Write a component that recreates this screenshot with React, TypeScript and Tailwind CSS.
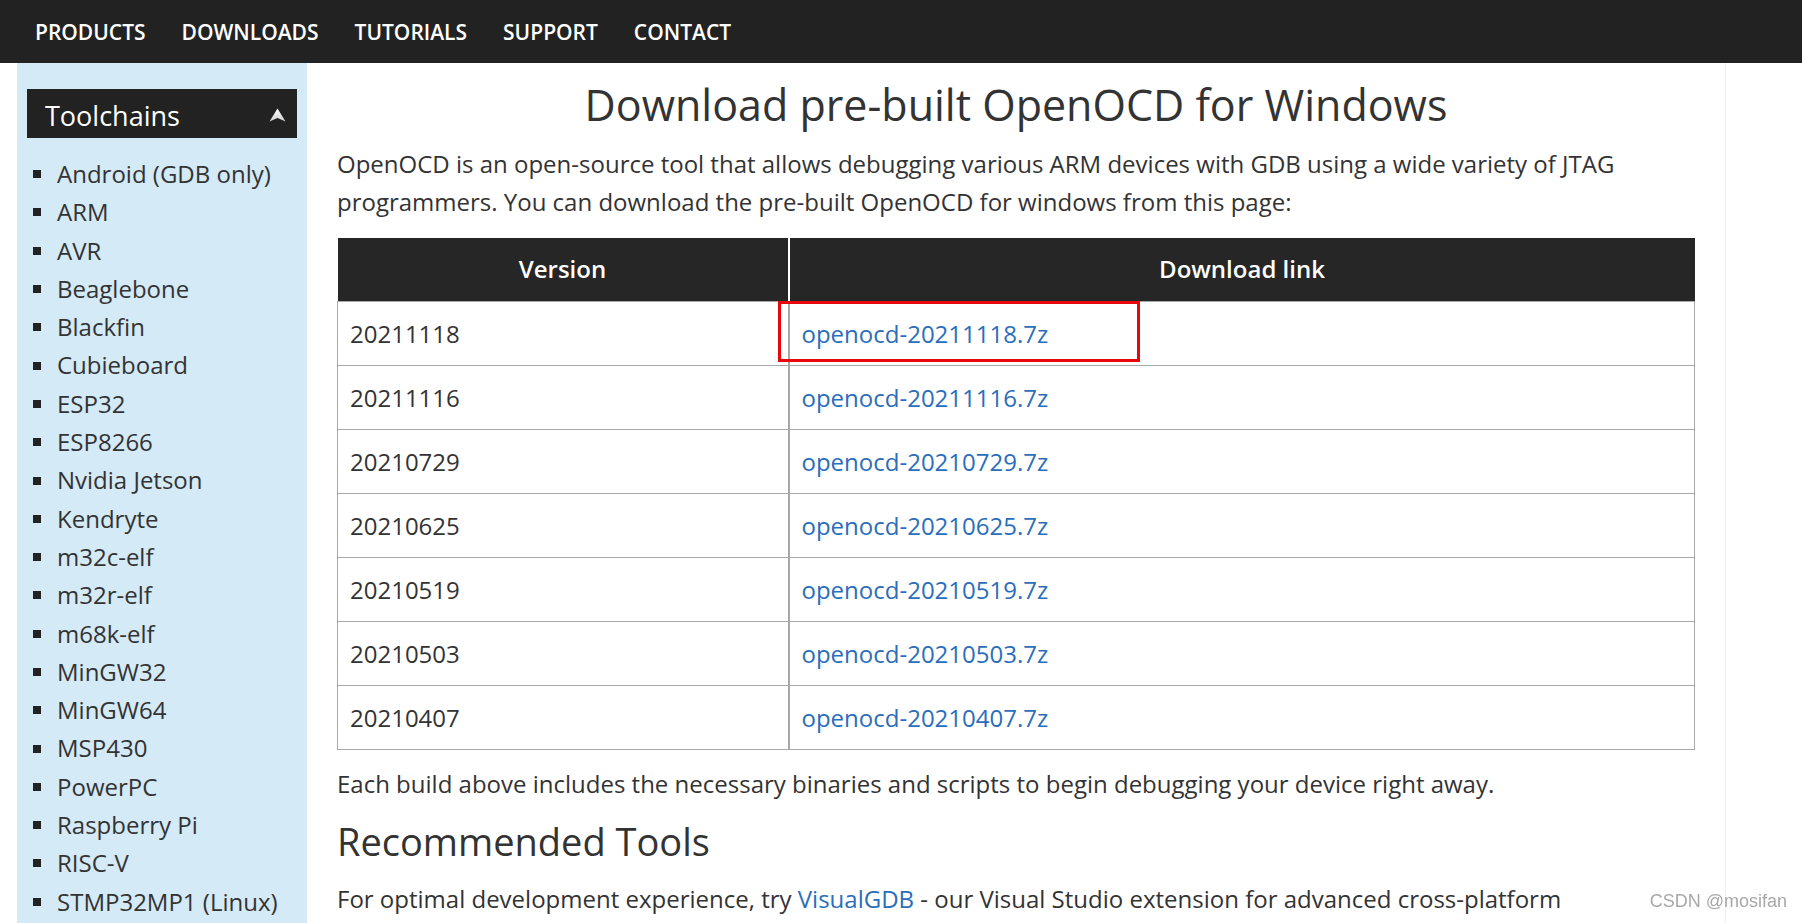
import React from "react";

const navItems = ["PRODUCTS", "DOWNLOADS", "TUTORIALS", "SUPPORT", "CONTACT"];

const toolchains = [
  "Android (GDB only)",
  "ARM",
  "AVR",
  "Beaglebone",
  "Blackfin",
  "Cubieboard",
  "ESP32",
  "ESP8266",
  "Nvidia Jetson",
  "Kendryte",
  "m32c-elf",
  "m32r-elf",
  "m68k-elf",
  "MinGW32",
  "MinGW64",
  "MSP430",
  "PowerPC",
  "Raspberry Pi",
  "RISC-V",
  "STMP32MP1 (Linux)",
  "Windows",
];

const builds = ["20211118", "20211116", "20210729", "20210625", "20210519", "20210503", "20210407"];

function ArrowUp() {
  return (
    <svg width="17" height="14" viewBox="0 0 17 14" className="block">
      <defs>
        <linearGradient id="arr" x1="0" y1="0" x2="0" y2="1">
          <stop offset="0" stopColor="#ffffff" />
          <stop offset="1" stopColor="#cfcfcf" />
        </linearGradient>
      </defs>
      <path d="M8.5 0.5 L16.5 13.5 L8.5 10 L0.5 13.5 Z" fill="url(#arr)" />
    </svg>
  );
}

export default function App() {
  return (
    <div className="min-h-[1100px] bg-white font-['Open_Sans',sans-serif] text-[#333]">
      <nav className="flex h-[63px] items-center bg-[#222] pt-[2px] pl-[17px]">
        {navItems.map((item) => (
          <a
            key={item}
            href="#"
            className="px-[18px] text-[21px] font-semibold leading-none text-white"
          >
            {item}
          </a>
        ))}
      </nav>

      <div className="flex pl-[17px]">
        <aside className="w-[290px] shrink-0 bg-[#d4eaf7] px-[10px] pt-[26px]">
          <div className="flex h-[49px] items-center justify-between bg-[#222] pt-[3px] pl-[18px] pr-[11px]">
            <span className="text-[27px] leading-none text-white">Toolchains</span>
            <ArrowUp />
          </div>
          <ul className="mt-[17px] pb-6">
            {toolchains.map((name) => (
              <li key={name} className="flex items-center text-[24px] leading-[38.3px]">
                <span className="ml-[6px] mr-[16px] h-[8px] w-[8px] shrink-0 bg-[#222]" />
                {name}
              </li>
            ))}
          </ul>
        </aside>

        <main className="w-[1419px] shrink-0 border-r border-[#f1f1f1] px-[30px]">
          <h1 className="mt-[17px] text-center text-[43px] leading-[50px] font-normal">
            Download pre-built OpenOCD for Windows
          </h1>
          <p className="mt-[15px] text-[24px] leading-[38px]">
            OpenOCD is an open-source tool that allows debugging various ARM devices with GDB using a wide variety of JTAG
            programmers. You can download the pre-built OpenOCD for windows from this page:
          </p>

          <table className="mt-[17px] w-[1358px] border-collapse text-[24px]">
            <thead>
              <tr className="h-[63px] bg-[#262626] text-white">
                <th className="w-[451px] border-r-2 border-white font-semibold">Version</th>
                <th className="font-semibold">Download link</th>
              </tr>
            </thead>
            <tbody>
              {builds.map((b, i) => (
                <tr key={b} className="h-[64px] border border-[#a8a8a8]">
                  <td className="border-r-2 border-[#a8a8a8] px-[12px] pt-[2px]">{b}</td>
                  <td className="relative px-[12px] pt-[2px]">
                    <a href="#" className="text-[#2a6ebb]">
                      openocd-{b}.7z
                    </a>
                    {i === 0 && (
                      <span className="pointer-events-none absolute top-[-1px] left-[-12px] h-[61px] w-[362px] border-[3px] border-[#e8070b]" />
                    )}
                  </td>
                </tr>
              ))}
            </tbody>
          </table>

          <p className="mt-[15px] text-[24px] leading-[38px]">
            Each build above includes the necessary binaries and scripts to begin debugging your device right away.
          </p>
          <h2 className="mt-[16px] text-[38px] leading-[44px] font-normal">Recommended Tools</h2>
          <p className="mt-[17px] text-[24px] leading-[38px]">
            For optimal development experience, try{" "}
            <a href="#" className="text-[#2a6ebb]">
              VisualGDB
            </a>{" "}
            - our Visual Studio extension for advanced cross-platform development that supports building, debugging
            and analyzing your projects.
          </p>
        </main>
      </div>

      <div className="fixed right-[15px] bottom-[8px] font-['Liberation_Sans',sans-serif] text-[18px] text-[#a8a8a8]">
        CSDN @mosifan
      </div>
    </div>
  );
}
